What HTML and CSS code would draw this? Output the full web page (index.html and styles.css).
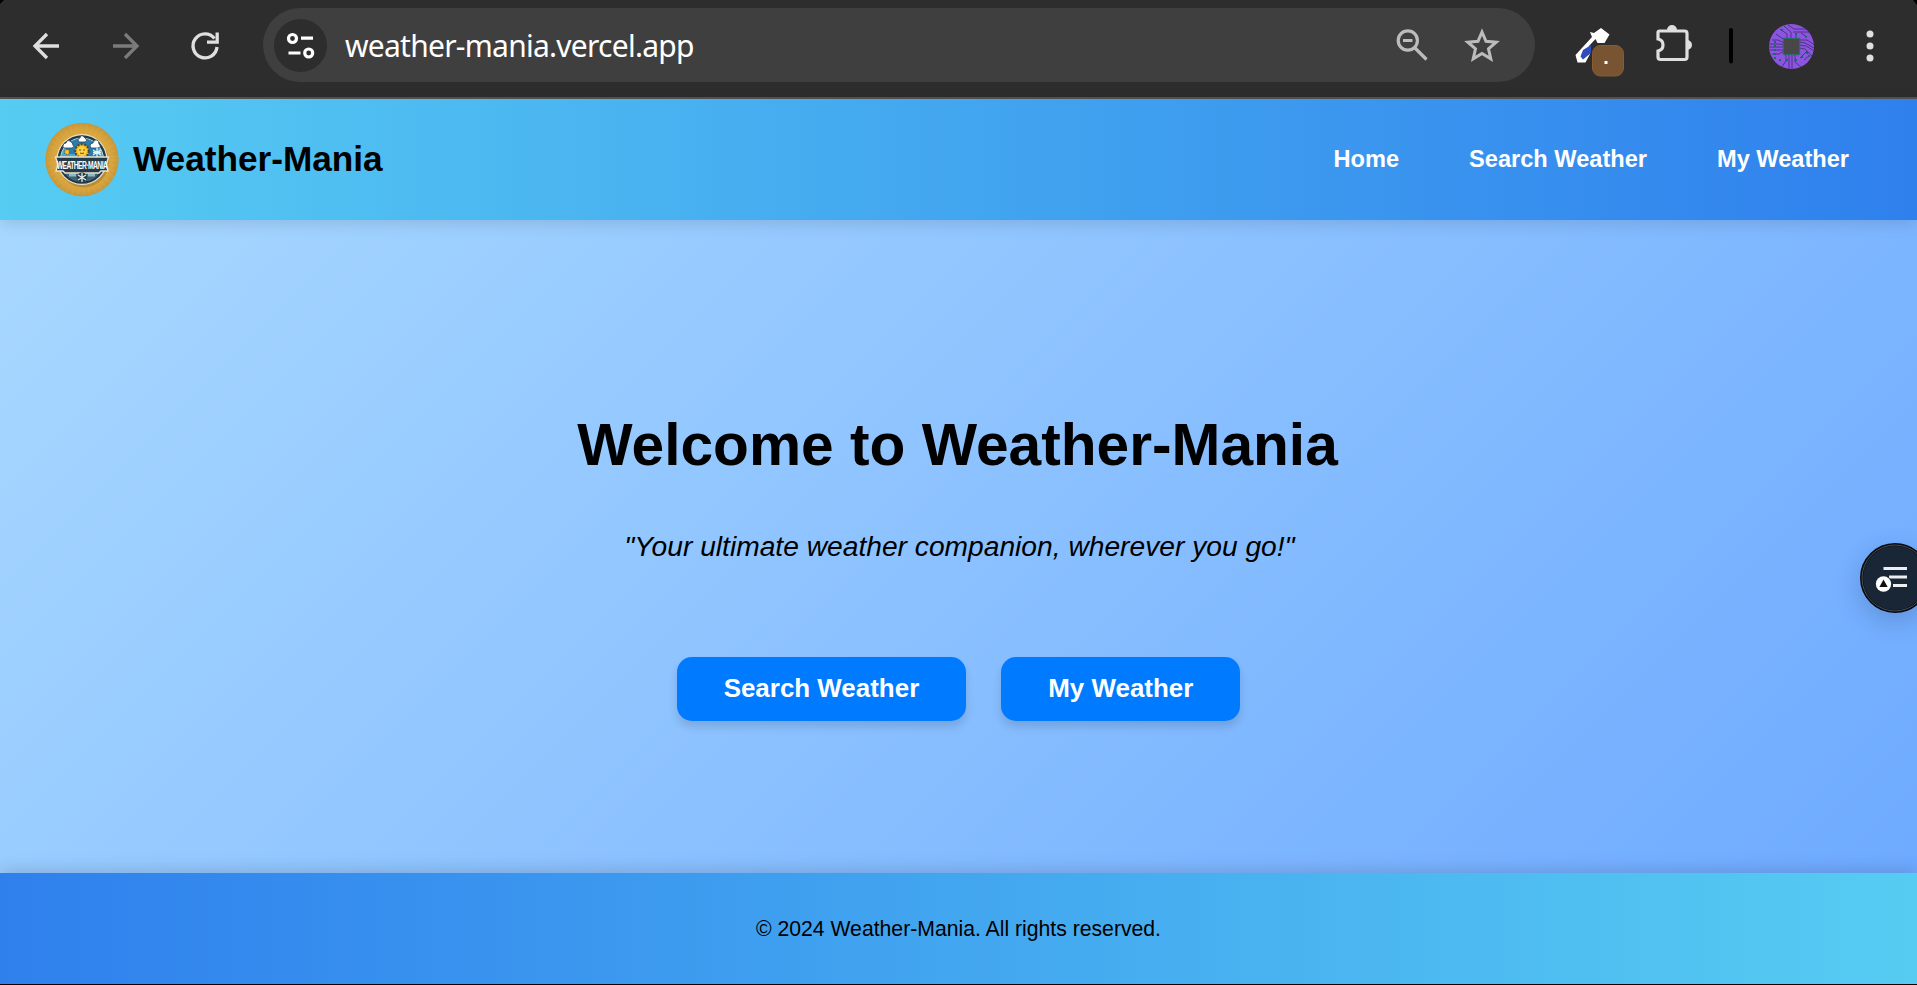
FILE: index.html
```html
<!DOCTYPE html>
<html lang="en">
<head>
<meta charset="utf-8">
<title>Weather-Mania</title>
<link rel="stylesheet" href="styles.css">
</head>
<body>
<div class="browser">
  <div class="toolbar">
    <svg class="nav-icons" width="263" height="97" viewBox="0 0 263 97" fill="none">
      <path d="M0 0H4L0 4Z" fill="#000"/>
      <path d="M59 46H35M47 34L35 46L47 58" stroke="#dfdfdf" stroke-width="3.300"/>
      <path d="M113 46H137M125 34L137 46L125 58" stroke="#7b7b7b" stroke-width="3.300"/>
      <path d="M214.500 38.500A12 12 0 1 0 217 47" stroke="#dfdfdf" stroke-width="3.300"/>
      <path d="M217.200 32.500V42.200H207" stroke="#dfdfdf" stroke-width="3.300"/>
    </svg>
    <div class="address">
      <div class="site-info">
        <svg width="53" height="53" viewBox="0 0 53 53" fill="none" stroke="#fff" stroke-width="3.200">
          <circle cx="18.500" cy="19.500" r="4"/><path d="M27 19.200H39M14.500 34H26.500"/><circle cx="34.700" cy="34" r="4"/>
        </svg>
      </div>
      <span class="url">weather-mania.vercel.app</span>
      <svg class="address-icons" width="116" height="40" viewBox="1390 25 116 40" fill="none" stroke="#bcbcbc" stroke-width="3.200">
        <circle cx="1407.800" cy="40.500" r="9.600"/><path d="M1403 40.500H1412.500M1415 48L1426.500 59.500"/>
        <path d="M1482 32L1486 41.300L1496.200 42.200L1488.500 48.800L1490.800 58.800L1482 53.500L1473.200 58.800L1475.500 48.800L1467.800 42.200L1478 41.300Z" stroke-width="3"/>
      </svg>
    </div>
    <svg class="extensions" width="382" height="97" viewBox="1535 0 382 97" fill="none">
      <path d="M1917 0V5L1913 0Z" fill="#000"/>
      <path d="M1590 32L1594 33L1601 28L1609.500 34.500L1604.500 43H1597.500L1595.500 39L1589 46L1590 54L1585.500 62.500H1577.500L1575.500 55L1592 37Z" fill="#fff"/>
      <path d="M1591 45V53L1583 59.500L1580.500 56.500L1583 50Z" fill="#304bbd"/>
      <rect x="1592.500" y="45.500" width="31" height="30.500" rx="8" fill="#785433" stroke="#8a5c2f"/>
      <rect x="1604.500" y="61" width="3" height="3" fill="#fff"/>
      <path d="M1659.500 31H1684.500Q1687 31 1687 33.500V57Q1687 59.500 1684.500 59.500H1660.500Q1658 59.500 1658 57V51Q1663 50 1663 45Q1663 40 1658 39V32.500Q1658 31 1659.500 31Z" stroke="#dfdfdf" stroke-width="3.200"/>
      <path d="M1667 30A5 5 0 0 1 1677 30ZM1687 40A5 5 0 0 1 1687 50Z" fill="#dfdfdf"/>
      <path d="M1731 30V61.500" stroke="#000" stroke-width="4" stroke-linecap="round"/>
      <g>
        <clipPath id="avatar"><circle cx="1791.500" cy="46.500" r="22.500"/></clipPath>
        <circle cx="1791.500" cy="46.500" r="22.500" fill="#8c55e0"/>
        <g clip-path="url(#avatar)">
          <path d="M1768 47H1785M1768 44H1779L1785 45M1768 50H1785M1772 40H1778L1784 43M1772 54H1779L1784 51M1799 42L1805 43L1816 49M1799 45L1806 46L1816 52M1799 48L1805 49L1813 57M1799 40L1807 40L1816 46M1789 55V71M1792 55V71M1795 55V62L1801 67M1786 55V61L1781 68M1780 29L1787 34V38M1784 26L1791 32V38M1788 25L1794 29H1806M1793 32H1810M1796 38V34M1801 33L1807 37M1776 34L1783 39M1800 58L1807 51M1804 60L1810 55" stroke="#4b2d7d" stroke-width=".9"/>
          <path d="M1775 41V59M1782 29V31M1795 34H1798M1806 36V38M1779 60H1782M1786 60H1788M1795 60H1797M1801 57H1803M1809 55V57M1806 53H1808" stroke="#176a61" stroke-width="2" stroke-dasharray="2 2"/>
          <rect x="1783.500" y="38.500" width="16" height="16" fill="#484848" stroke="#14745c" stroke-width="1.500" stroke-dasharray="2 1"/>
          <rect x="1784" y="39" width="15" height="15" fill="#484848"/>
        </g>
      </g>
      <g fill="#dfdfdf"><circle cx="1870" cy="34" r="3.500"/><circle cx="1870" cy="46" r="3.500"/><circle cx="1870" cy="58" r="3.500"/></g>
    </svg>
  </div>

  <header class="header">
    <div class="brand">
      <svg width="74" height="74" viewBox="0 0 74 74">
        <defs><radialGradient id="gold"><stop offset=".6" stop-color="#e0ae42"/><stop offset=".85" stop-color="#d5a13c"/><stop offset="1" stop-color="#c7953a"/></radialGradient></defs>
        <circle cx="37" cy="36.500" r="36.700" fill="url(#gold)"/>
        <circle cx="37" cy="36.500" r="30" fill="none" stroke="#e2b64e" stroke-width="11" stroke-dasharray="1 4" opacity=".3"/>
        <circle cx="38.500" cy="39" r="25.500" fill="#8d6c2f" opacity=".45"/>
        <circle cx="37" cy="36.500" r="25.500" fill="#e8e3c8"/>
        <circle cx="37" cy="36.500" r="24.300" fill="#21394b"/>
        <circle cx="37" cy="36.500" r="21.500" fill="#4ba8cf" stroke="#b9d8d9" stroke-width="1"/>
        <path d="M24 19L19 31H31L36 23L44 34H55L49 19L38 14Z" fill="#287dae"/>
        <g fill="#fff" stroke="#263f52" stroke-width=".8">
          <path d="M18 23Q18 20 21 20Q22 16 25 18Q28 20 28 22Q30 24 27 25H20Q17 25 18 23Z"/>
          <path d="M33 17Q33 15 35 15Q36 11 39 14L41 16Q43 18 40 19H34Z"/>
          <path d="M45 23Q45 20 48 20Q49 16 52 17Q54 18 54 21Q57 24 53 25H46Z"/>
        </g>
        <circle cx="37" cy="28" r="6.800" fill="#f5b521" stroke="#4c4630" stroke-width="2" stroke-dasharray="2 1.400"/>
        <circle cx="37" cy="28" r="4.700" fill="#ffd23f"/>
        <path d="M35 26V28M39 26V28M35 30Q37 31 39 30" stroke="#6a481e" fill="none"/>
        <circle cx="22" cy="29" r="2.500" fill="#ffbd27" stroke="#594b2e" stroke-dasharray="1 1"/>
        <path d="M52 25V34M48 27L56 32M56 27L48 32M48 29.500H56" stroke="#e1f1f4" stroke-width="1.300"/>
        <path d="M18 47H56L51 54L44 58H31L23 54Z" fill="#40616f"/>
        <path d="M24 52H31M43 52H50" stroke="#8db9c4" stroke-width="3"/>
        <path d="M10.500 34H63.500L61.500 41L63 48H56L54 50H20L18 48H11L13 41Z" fill="#263b49" stroke="#eae5ce" stroke-width="1.400"/>
        <text class="badge-text" transform="translate(37 46) scale(.67 1)" text-anchor="middle">WEATHER·MANIA</text>
        <circle cx="37" cy="54.500" r="5" fill="#263b49"/>
        <path d="M37 50V59M33 52L41 57M41 52L33 57" stroke="#e5ece8" stroke-width="1.300"/>
      </svg>
      <span class="brand-name">Weather-Mania</span>
    </div>
    <nav class="menu"><a>Home</a><a>Search Weather</a><a>My Weather</a></nav>
  </header>

  <main class="hero">
    <h1>Welcome to Weather-Mania</h1>
    <p class="tagline">"Your ultimate weather companion, wherever you go!"</p>
    <div class="actions"><a class="button">Search Weather</a><a class="button">My Weather</a></div>
  </main>

  <footer class="footer">© 2024 Weather-Mania. All rights reserved.</footer>

  <div class="reader">
    <svg width="70" height="70" viewBox="0 0 70 70">
      <circle cx="35" cy="35" r="33.500" fill="#182635" stroke="#070a0e" stroke-width="3"/><circle cx="35" cy="35" r="33" fill="none" stroke="#59616a" stroke-width=".8"/>
      <path d="M23.500 25.500H47M29 34H47M33 42.500H47" stroke="#eee" stroke-width="2.800"/>
      <circle cx="23.500" cy="41" r="8.500" fill="#182635"/><circle cx="23.500" cy="41" r="7.700" fill="#fff"/><path d="M23.500 36.500L27.700 44H19.400Z" fill="#111"/>
    </svg>
  </div>
</div>
</body>
</html>
```
FILE: styles.css
```css
* { box-sizing: border-box; }
body { margin: 0; background: #000; font-family: "Liberation Sans", Arial, sans-serif; color: #000; }
.browser { position: relative; width: 1917px; height: 985px; overflow: hidden; display: flex; flex-direction: column; border-bottom: 1px solid #000; }
.toolbar { height: 99px; flex: none; display: flex; background: #2d2d2d; border-bottom: 2px solid #535353; }
.toolbar svg { display: block; flex: none; }
.address { width: 1272px; height: 74px; margin-top: 8px; padding: 0 29px 0 11px; border-radius: 37px; background: #3f3f3f; display: flex; align-items: center; }
.site-info { width: 53px; height: 53px; border-radius: 50%; background: #2d2d2d; }
.url { margin-left: 18px; padding-top: 2px; font: 30px/40px "Noto Sans", sans-serif; letter-spacing: -.74px; color: #fff; white-space: nowrap; }
.address-icons { margin-left: auto; }
.header { position: relative; z-index: 1; height: 121px; flex: none; padding: 0 68px 0 45px; display: flex; justify-content: space-between; align-items: center; background: linear-gradient(90deg, #56ccf2, #2f80ed); box-shadow: 0 4px 15px rgba(0, 0, 0, .12); }
.brand { display: flex; align-items: center; gap: 14px; }
.brand svg { display: block; overflow: visible; }
.brand-name { padding-bottom: 2px; font-size: 35.2px; font-weight: 700; }
.badge-text { font: 700 10px/12px "Liberation Sans", sans-serif; letter-spacing: -.8px; fill: #fff; }
.menu { display: flex; gap: 70px; font-size: 23.600px; font-weight: 700; color: #fff; }
.hero { flex: 1; display: flex; flex-direction: column; align-items: center; background: linear-gradient(135deg, #a8d8ff, #6eaaff); }
h1 { margin: 191px 2px 0 0; font-size: 58.670px; line-height: 68px; }
.tagline { margin: 51px 0 0 2px; font-size: 28.200px; line-height: 32px; font-style: italic; }
.actions { display: flex; gap: 35px; margin-top: 95px; }
.button { height: 64px; padding: 0 47px; line-height: 62px; border-radius: 15px; background: #007bff; color: #fff; font-size: 25.940px; font-weight: 700; box-shadow: 0 6px 9px rgba(0, 0, 0, .13); }
.footer { position: relative; height: 111px; flex: none; text-align: center; line-height: 112px; font-size: 21.200px; background: linear-gradient(90deg, #2f80ed, #56ccf2); box-shadow: 0 -4px 15px rgba(0, 0, 0, .13); }
.reader { position: absolute; z-index: 2; left: 1860px; top: 543px; width: 70px; height: 70px; border-radius: 50%; box-shadow: 0 8px 26px rgba(20, 40, 80, .22); }
.reader svg { display: block; }
```
